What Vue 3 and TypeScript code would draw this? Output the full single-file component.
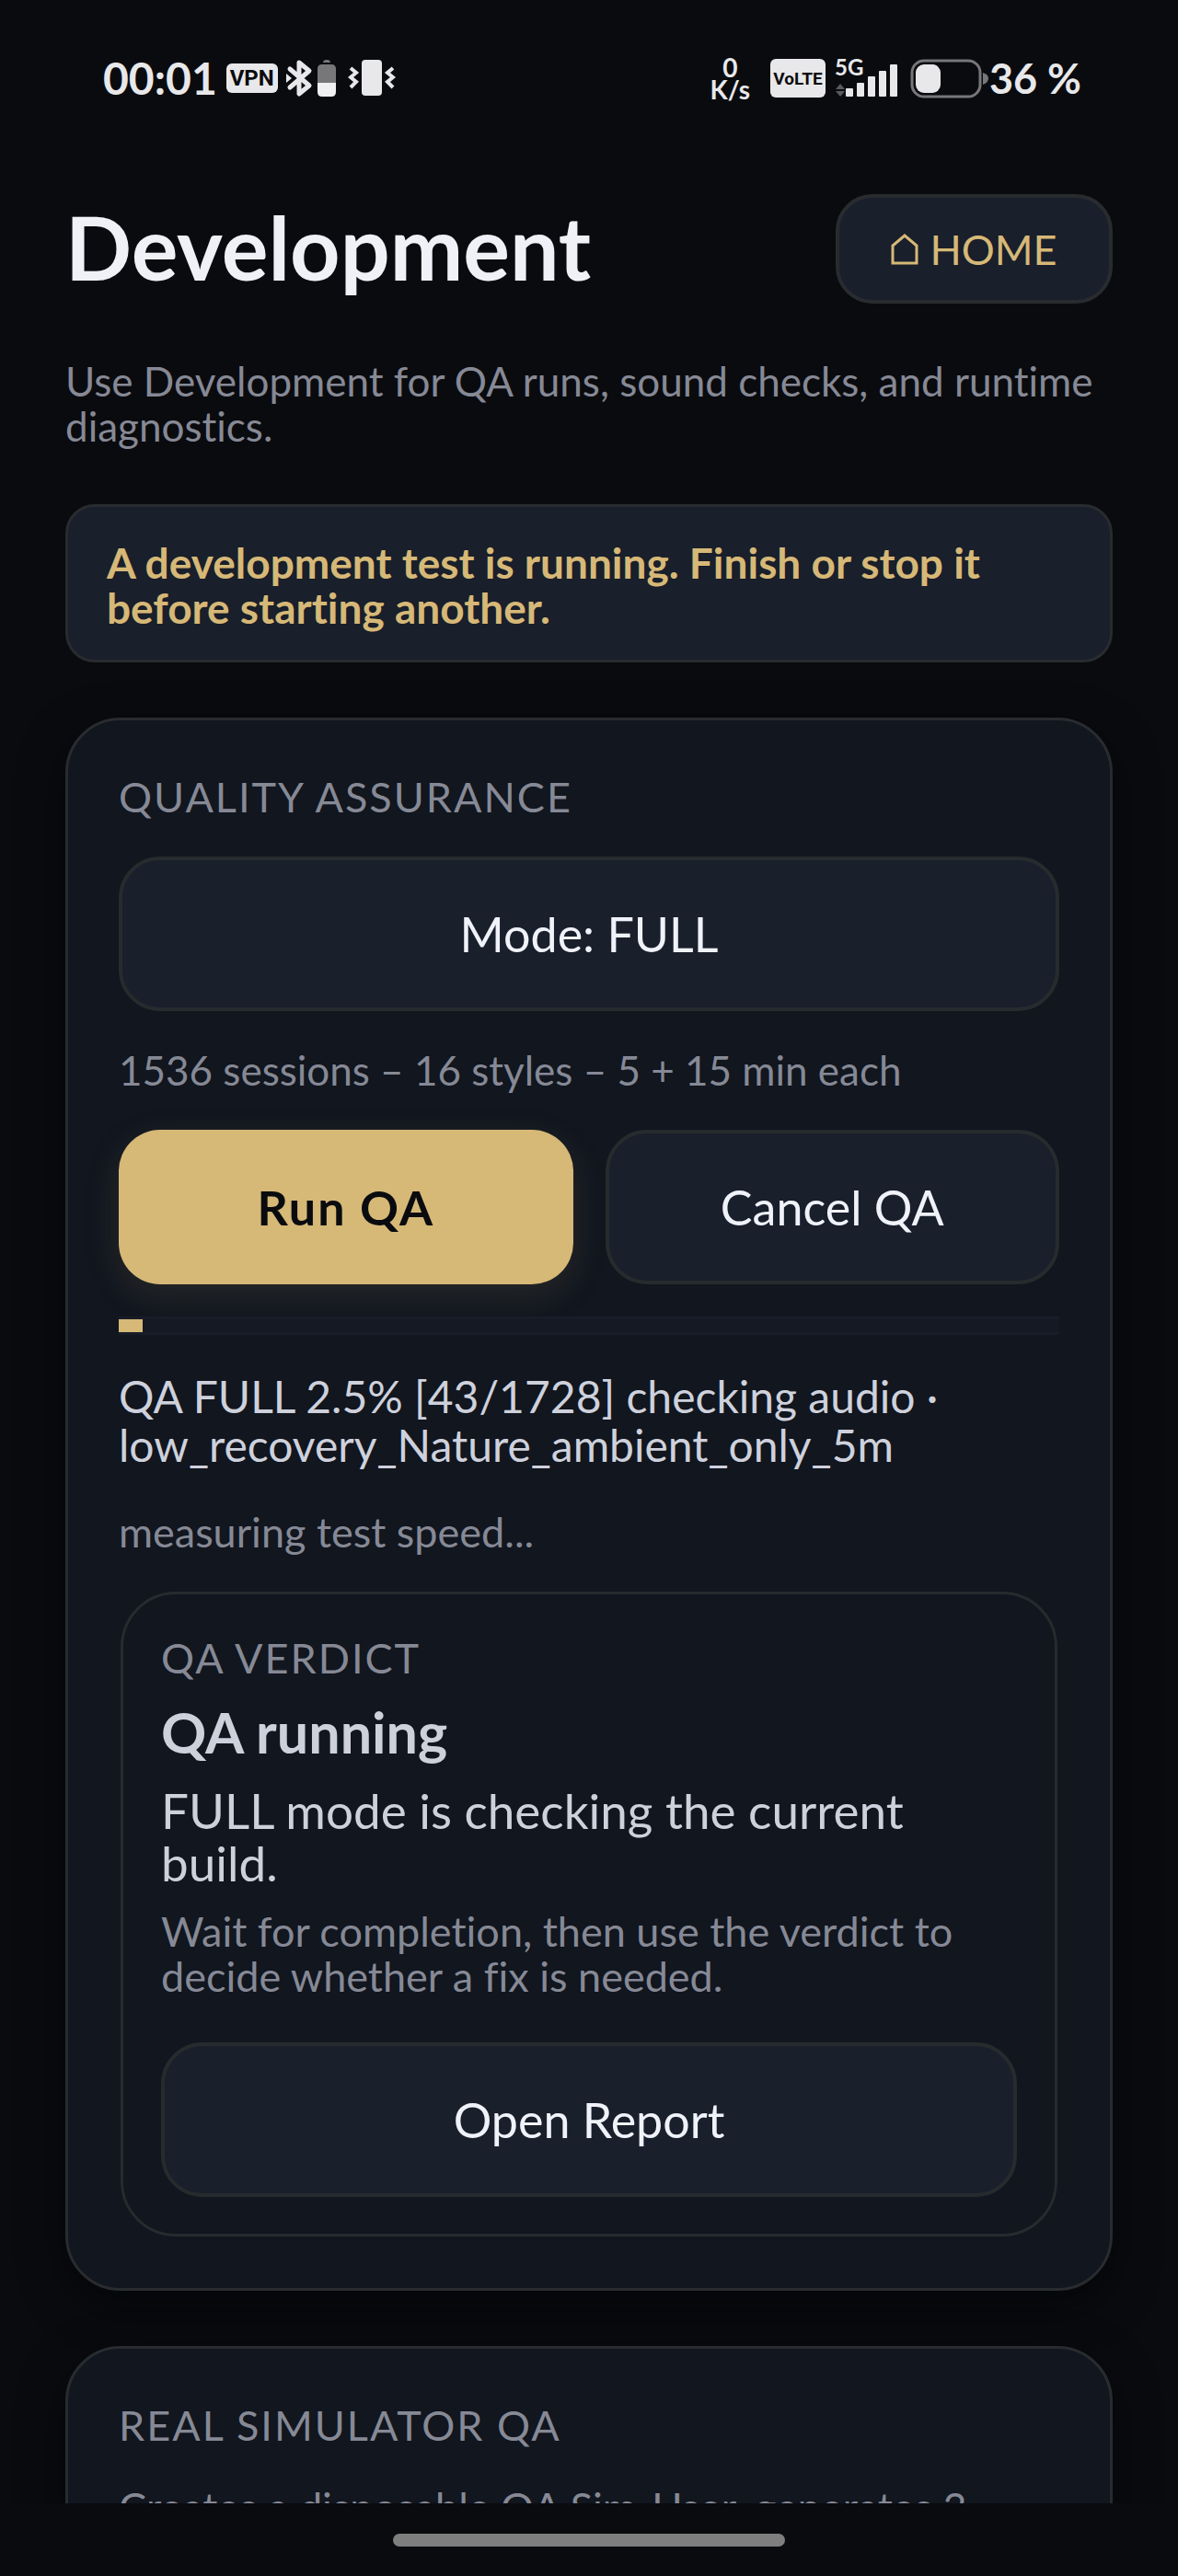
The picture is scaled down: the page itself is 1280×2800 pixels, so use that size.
<script setup lang="ts">
import { ref } from 'vue'

const done = ref(43)
const total = ref(1728)
const percent = ref(2.5)
const signalBars = [9, 15, 22, 28, 35]
</script>

<template>
  <div class="screen">
    <header class="status" aria-label="Status bar">
      <div class="group">
        <span class="clock">00:01</span>
        <span class="badge vpn">VPN</span>
        <svg class="bluetooth" width="30" height="42" viewBox="0 0 30 42" aria-hidden="true">
          <path d="M5 11 L26 29 L15 38 V4 L26 13 L5 31" fill="none" stroke="#e8e8ea" stroke-width="5" stroke-linejoin="round" stroke-linecap="round" />
          <path d="M1 16 L7 21 L1 26 Z" fill="#e8e8ea" />
        </svg>
        <svg class="cell" width="22" height="42" viewBox="0 0 22 42" aria-hidden="true">
          <path d="M7 4 Q7 1 11 1 Q15 1 15 4 Z" fill="#77777a" />
          <path d="M6 6 H16 Q21 6 21 11 V27 H1 V11 Q1 6 6 6 Z" fill="#77777a" />
          <path d="M1 26 H21 V36 Q21 41 16 41 H6 Q1 41 1 36 Z" fill="#f0f0f2" />
        </svg>
        <svg class="vibrate" width="52" height="42" viewBox="0 0 52 42" aria-hidden="true">
          <rect x="15" y="1" width="22" height="39" rx="4" fill="#e8e8ea" />
          <path d="M3 10 L9 15 L3 20 L9 25 L3 31" fill="none" stroke="#e8e8ea" stroke-width="4" />
          <path d="M49 10 L43 15 L49 20 L43 25 L49 31" fill="none" stroke="#e8e8ea" stroke-width="4" />
        </svg>
      </div>
      <div class="group">
        <span class="rate"><span>0</span><span>K/s</span></span>
        <span class="badge volte">VoLTE</span>
        <svg class="signal" width="70" height="42" viewBox="0 0 70 42" aria-label="5G">
          <text x="0" y="18" class="gen">5G</text>
          <path d="M1 33 L6 27 L11 33 Z M1 35 L6 41 L11 35 Z" fill="#5a5a5d" />
          <rect v-for="(h, i) in signalBars" :key="h" :x="12 + i * 12" :y="41 - h" width="8" :height="h" rx="1" fill="#e8e8ea" />
        </svg>
        <svg class="battery" width="86" height="44" viewBox="0 0 86 44" aria-hidden="true">
          <rect x="2" y="3" width="74" height="39" rx="13" fill="none" stroke="#77777a" stroke-width="3" />
          <rect x="6" y="7" width="27" height="31" rx="9" fill="#e8e8ea" />
          <path d="M79 16 Q85 18 85 22 Q85 27 79 29 Z" fill="#77777a" />
        </svg>
        <span class="clock level">36 %</span>
      </div>
    </header>

    <main class="content">
      <div class="heading">
        <h1>Development</h1>
        <button type="button" class="home">
          <svg width="30" height="34" viewBox="0 0 30 34" aria-hidden="true">
            <path d="M2 32 V13 L15 2 L28 13 V32 Z" fill="none" stroke="currentColor" stroke-width="3" />
          </svg>
          HOME
        </button>
      </div>
      <p class="muted intro">Use Development for QA runs, sound checks, and runtime diagnostics.</p>

      <p class="notice" role="status">A development test is running. Finish or stop it before starting another.</p>

      <section class="card">
        <h2 class="label">QUALITY ASSURANCE</h2>
        <button type="button" class="btn">Mode: FULL</button>
        <p class="muted">1536 sessions – 16 styles – 5 + 15 min each</p>
        <div class="actions">
          <button type="button" class="btn primary">Run QA</button>
          <button type="button" class="btn">Cancel QA</button>
        </div>
        <div class="progress">
          <progress class="bar" aria-label="QA progress" :value="percent" max="100"></progress>
          <p class="body">QA FULL {{ percent }}% [{{ done }}/{{ total }}] checking audio · low_recovery_Nature_ambient_only_5m</p>
          <p class="muted note">measuring test speed...</p>
        </div>
        <section class="verdict">
          <h3 class="label">QA VERDICT</h3>
          <p class="state">QA running</p>
          <p class="lead">FULL mode is checking the current build.</p>
          <p class="muted note">Wait for completion, then use the verdict to decide whether a fix is needed.</p>
          <button type="button" class="btn">Open Report</button>
        </section>
      </section>

      <section class="card">
        <h2 class="label">REAL SIMULATOR QA</h2>
        <p class="muted note">Creates a disposable QA Sim-User, generates 3</p>
      </section>
    </main>

    <footer class="nav"><span class="handle"></span></footer>
  </div>
</template>

<style>
body {
  background: #0a0b0f;
}
</style>

<style scoped>
.screen {
  display: flex;
  flex-direction: column;
  height: 100vh;
  background: #0a0b0f;
  color: #f0f1f6;
  font-family: Lato, 'Noto Sans', sans-serif;
  font-variant-ligatures: none;
}

.screen * {
  box-sizing: border-box;
}

h1, h2, h3, p {
  margin: 0;
  font-weight: 400;
}

button {
  font-family: inherit;
  cursor: pointer;
}

.status {
  display: flex;
  flex: none;
  justify-content: space-between;
  height: 168px;
  padding: 2px 105px 0 112px;
  color: #e8e8ea;
}

.group {
  display: flex;
  align-items: center;
}

.clock {
  font-size: 48px;
  font-weight: 700;
  line-height: 56px;
  white-space: nowrap;
}

.level {
  font-size: 45px;
}

.badge {
  display: flex;
  align-items: center;
  justify-content: center;
  border-radius: 6px;
  background: #e8e8ea;
  color: #0a0b0f;
  font-weight: 700;
}

.vpn {
  width: 56px;
  height: 32px;
  margin-left: 10px;
  font-family: Roboto, sans-serif;
  font-size: 24px;
}

.bluetooth {
  margin-left: 8px;
}

.cell {
  margin-left: 4px;
}

.vibrate {
  margin-left: 12px;
}

.rate {
  display: flex;
  flex-direction: column;
  align-items: center;
  font-size: 28px;
  font-weight: 700;
  line-height: 24px;
}

.volte {
  width: 60px;
  height: 42px;
  margin-left: 22px;
  font-family: Roboto, sans-serif;
  font-size: 19px;
}

.signal {
  margin-left: 10px;
  overflow: visible;
}

.gen {
  fill: #e8e8ea;
  font-size: 24px;
  font-weight: 700;
}

.battery {
  margin-left: 12px;
}

.content {
  display: flex;
  flex: 1;
  flex-direction: column;
  gap: 60px;
  min-height: 0;
  padding: 43px 71px 0;
  overflow: hidden;
}

.heading {
  display: flex;
  flex: none;
  align-items: center;
  justify-content: space-between;
}

h1 {
  padding-bottom: 6px;
  font-size: 95px;
  font-weight: 700;
  line-height: 104px;
}

.home {
  display: flex;
  align-items: center;
  justify-content: center;
  gap: 12px;
  width: 301px;
  height: 119px;
  padding: 0;
  border: 4px solid #292c2f;
  border-radius: 40px;
  background: #191f2b;
  color: #d6b877;
  font-size: 45px;
}

.muted {
  color: #868995;
  font-size: 44px;
  line-height: 49px;
}

.note {
  font-size: 45px;
}

.intro {
  flex: none;
}

.notice {
  flex: none;
  padding: 36px 42px 32px;
  border: 3px solid #292c2f;
  border-radius: 32px;
  background: #191f2b;
  color: #d6b877;
  font-size: 46px;
  font-weight: 700;
  line-height: 49px;
}

.card {
  display: flex;
  flex: none;
  flex-direction: column;
  gap: 40px;
  padding: 59px 55px 56px;
  border: 3px solid #292c2f;
  border-radius: 60px;
  background: #11161f;
  box-shadow: 0 16px 48px rgba(0, 0, 0, 0.5);
}

.label {
  color: #868995;
  font-size: 45px;
  letter-spacing: 2px;
  line-height: 49px;
}

.btn {
  height: 168px;
  padding: 0;
  border: 4px solid #262b2e;
  border-radius: 45px;
  background: #191f2b;
  color: #f0f2fa;
  font-size: 52px;
}

.actions {
  display: grid;
  grid-template-columns: 1fr 1fr;
  gap: 35px;
}

.primary {
  border: 0;
  background: #d6b877;
  box-shadow: 0 12px 40px rgba(214, 184, 119, 0.12);
  color: #0a0b0f;
  font-weight: 700;
  letter-spacing: 2px;
}

.progress {
  display: flex;
  flex-direction: column;
  gap: 40px;
  margin-top: -5px;
}

.progress .note {
  margin-top: 4px;
}

.bar {
  display: block;
  width: 100%;
  height: 20px;
  border: solid #191c28;
  border-width: 3px 0;
  background: #151924;
  appearance: none;
}

.bar::-webkit-progress-bar {
  background: #151924;
}

.bar::-webkit-progress-value {
  background: #d6b877;
}

.body {
  color: #ced1dc;
  font-size: 48px;
  line-height: 53px;
}

.verdict {
  display: flex;
  flex-direction: column;
  gap: 22px;
  margin: 0 2px;
  padding: 45px 41px 40px;
  border: 3px solid #262b2e;
  border-radius: 60px;
}

.verdict .btn {
  margin-top: 25px;
}

.state {
  color: #ced1dc;
  font-size: 61px;
  font-weight: 700;
  line-height: 68px;
}

.lead {
  color: #ced1dc;
  font-size: 53px;
  line-height: 57px;
}

.nav {
  display: flex;
  flex: none;
  align-items: center;
  justify-content: center;
  height: 79px;
}

.handle {
  width: 426px;
  height: 14px;
  border-radius: 7px;
  background: #7e7e7e;
}
</style>
